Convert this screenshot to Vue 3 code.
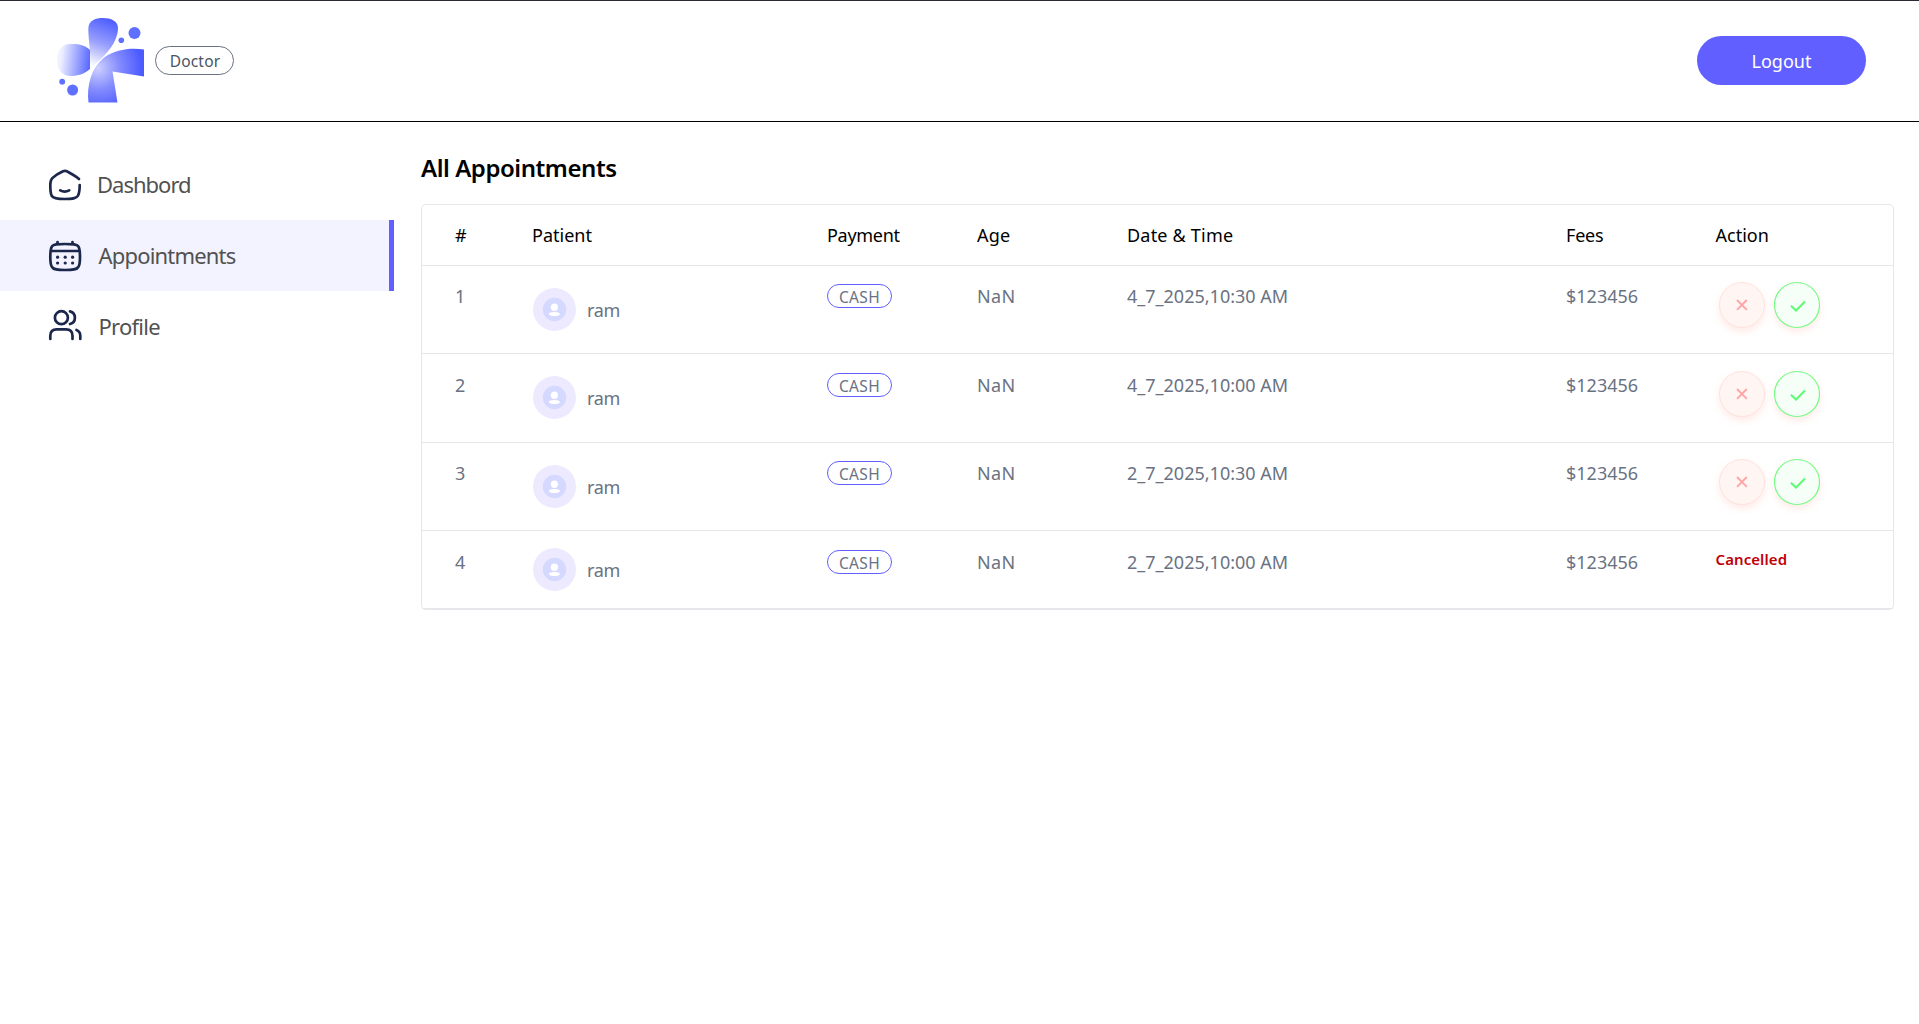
<script setup>
const headers = ['#', 'Patient', 'Payment', 'Age', 'Date & Time', 'Fees', 'Action']
const rows = [
  { n: 1, date: '4_7_2025,10:30 AM', cancelled: false },
  { n: 2, date: '4_7_2025,10:00 AM', cancelled: false },
  { n: 3, date: '2_7_2025,10:30 AM', cancelled: false },
  { n: 4, date: '2_7_2025,10:00 AM', cancelled: true },
]
</script>

<template>
  <div class="page">
    <header class="topbar">
      <svg class="logo" width="90" height="90" viewBox="0 0 90 90">
        <defs>
          <linearGradient id="gTop" gradientUnits="userSpaceOnUse" x1="36" y1="50" x2="54" y2="4">
            <stop offset="0" stop-color="#ffffff" /><stop offset=".5" stop-color="#979efd" /><stop offset="1" stop-color="#4f5fff" />
          </linearGradient>
          <linearGradient id="gLeft" gradientUnits="userSpaceOnUse" x1="0" y1="42" x2="36" y2="46">
            <stop offset="0" stop-color="#f6f7ff" /><stop offset=".15" stop-color="#eceeff" /><stop offset="1" stop-color="#4f5fff" />
          </linearGradient>
          <radialGradient id="gMain" gradientUnits="userSpaceOnUse" cx="42" cy="52" r="44">
            <stop offset="0" stop-color="#cdd0ff" /><stop offset=".5" stop-color="#838bfd" /><stop offset="1" stop-color="#4b5bff" />
          </radialGradient>
        </defs>
        <path d="M34.500 52C35 38 32.300 24 32.300 13C32.300 4 40 2 47 2C55 2 62 5 62 12C62 26 50 40 34.500 52Z" fill="url(#gTop)" />
        <path d="M34 34C28 28 20 28 15 28C6 28 1 34 1 43C1 54 6 60 15 60C22 60 28 58 34 53Z" fill="url(#gLeft)" />
        <path d="M88 33.500V60.500L56.500 55.500L61.500 86.500H32.500C30.500 70 35 52 48 41.500C60 33.500 74 31.500 88 33.500Z" fill="url(#gMain)" />
        <circle cx="78.500" cy="17" r="6" fill="#5f6fff" /><circle cx="65.300" cy="24.300" r="2.800" fill="#5f6fff" />
        <circle cx="6.200" cy="65.700" r="2.900" fill="#5f6fff" /><circle cx="16.600" cy="74" r="5.500" fill="#5f6fff" />
      </svg>
      <p class="role"><span>Doctor</span></p>
      <button class="logout"><span>Logout</span></button>
    </header>

    <div class="body">
      <nav class="side">
        <a class="item">
          <svg width="34" height="34" viewBox="0 0 34 34" class="ico">
            <path d="M31 12C28.500 9.500 22 6 19 4.300Q17 3.300 15 4.300C12 5.700 7 8.700 4.500 10.900C2.400 12.800 2.300 15 2.300 18.500C2.300 23.500 2.500 26.500 3.800 29C5.300 31.500 9 32 16.700 32S28.600 31.500 30.100 28.500C31.500 25.500 31.700 22.500 31.700 18" />
            <path d="M12.200 23.300Q16.700 25.900 21.200 23.300" />
          </svg>
          <span class="t1">Dashbord</span>
        </a>
        <a class="item active">
          <svg width="34" height="34" viewBox="0 0 34 34" class="ico">
            <path d="M9.500 4V6.500M24.500 4V6.500M2.500 13H31.800M17 6C9 6 5.500 6.200 4 8.300C2.300 10.500 2.300 14.500 2.300 19S2.500 27 4 29C5.500 31.700 9 32 17 32S28.800 31.700 30.300 29C31.800 27 32 23.500 32 19S32 10.500 30.300 8.300C28.800 6.200 25 6 17 6Z" />
            <g class="dots"><circle v-for="i in 6" :key="i" :cx="[9.600, 17.200, 24.600][(i - 1) % 3]" :cy="i < 4 ? 19.200 : 25" r="1.600" /></g>
          </svg>
          <span class="t2">Appointments</span>
        </a>
        <a class="item">
          <svg width="34" height="34" viewBox="0 0 34 34" class="ico">
            <circle cx="13.400" cy="8.700" r="6.500" />
            <path d="M2.300 30V26.700Q2.300 20.300 8.800 20.300H18Q24.500 20.300 24.500 26.700V30M22 2.400A6.500 6.500 0 0 1 22 15M28.500 20.900Q32.300 22.400 32.300 26.700V30" />
          </svg>
          <span class="t3">Profile</span>
        </a>
      </nav>

      <main class="main">
        <h1><span>All Appointments</span></h1>
        <div class="table">
          <div class="row head">
            <span v-for="(h, i) in headers" :key="h"><span :class="'h' + i">{{ h }}</span></span>
          </div>
          <div v-for="r in rows" :key="r.n" class="row data" :class="'r' + r.n">
            <span class="txt">{{ r.n }}</span>
            <div class="patient">
              <svg width="43" height="43" viewBox="0 0 43 43">
                <circle cx="21.500" cy="21.500" r="21.500" fill="#edeaff" />
                <circle cx="21.500" cy="21.500" r="11.700" fill="#d6d9ff" />
                <ellipse cx="21.400" cy="19.200" rx="3.600" ry="3.700" fill="#fff" />
                <ellipse cx="21.400" cy="26" rx="5.600" ry="2.100" fill="#fff" />
              </svg>
              <span class="name">ram</span>
            </div>
            <div><p class="cash"><span>CASH</span></p></div>
            <span class="txt"><span class="nan">NaN</span></span>
            <span class="txt"><span class="date">{{ r.date }}</span></span>
            <span class="txt"><span class="fee">$123456</span></span>
            <p v-if="r.cancelled" class="cancelled"><span>Cancelled</span></p>
            <div v-else class="actions">
              <svg width="64" height="64" viewBox="0 0 64 64">
                <circle class="shadow" cx="32" cy="32" r="22" />
                <circle cx="32" cy="32" r="22.500" fill="#fff5f3" stroke="#ffe2dd" />
                <path d="M27 27L36.800 36.800M36.800 27L27 36.800" stroke="#ffa5a5" stroke-width="1.900" fill="none" />
              </svg>
              <svg width="64" height="64" viewBox="0 0 64 64">
                <circle class="shadow" cx="32" cy="32" r="22" />
                <circle cx="32" cy="32" r="22.500" fill="#f5fff8" stroke="#76fb86" stroke-width="1.200" />
                <path d="M26 32.800L31 37.500L40 28.500" stroke="#5dfb70" stroke-width="2" fill="none" />
              </svg>
            </div>
          </div>
        </div>
      </main>
    </div>
  </div>
</template>

<style>
body { margin: 0; background: #fff; }
</style>

<style scoped>
* { box-sizing: border-box; }
.page { height: 1024px; overflow: hidden; border-top: 1px solid #2b2a33; font-family: "Noto Sans", "Open Sans", sans-serif; background: #fff; }
p, h1 { margin: 0; }
.topbar { height: 121px; border-bottom: 1px solid #000; display: flex; align-items: center; padding: 0 53px 0 56px; }
.logo { flex: none; }
.role { margin: 0 0 1px 9px; width: 79px; height: 29px; border: 1px solid #6a7282; border-radius: 15px; display: flex; justify-content: center; align-items: center; font-size: 15.500px; letter-spacing: .200px; color: #4a5565; padding: 0 0 0 1px; white-space: nowrap; }
.logout { margin: 0 0 1px auto; width: 169px; height: 49px; border: 0; border-radius: 25px; background: #615fff; color: #fff; font: 18px "Noto Sans", sans-serif; padding: 0; }
.body { display: flex; }
.side { width: 394px; padding-top: 27px; }
.item { display: flex; align-items: center; height: 71px; padding: 0 0 2px 48px; gap: 17px; color: #515151; font-size: 22px; white-space: nowrap; }
.item.active { background: #f2f3ff; border-right: 5px solid #615fff; }
.t1 { letter-spacing: -1px; margin-left: -2px; }
.t2 { letter-spacing: -.820px; margin-left: -.500px; }
.t3 { letter-spacing: -.750px; margin-left: -.500px; }
.ico { flex: none; fill: none; stroke: #1c274c; stroke-width: 2.700; stroke-linecap: round; stroke-linejoin: round; }
.dots { fill: #1c274c; stroke: none; }
.main { padding-left: 27px; }
h1 { height: 82px; font-size: 24px; font-weight: 600; line-height: 34px; padding-top: 29px; letter-spacing: -.450px; color: #000; white-space: nowrap; }
.table { width: 1473px; height: 406px; border: 1px solid #e5e7eb; border-radius: 5px; }
.row { display: grid; grid-template-columns: 77px 295px 150px 150px 439px 149.500px 1fr; padding-left: 33px; border-bottom: 1px solid #e5e7eb; font-size: 18px; line-height: 24px; white-space: nowrap; }
.head { height: 61px; padding-top: 18px; color: #000; }
.h2 { letter-spacing: -.300px; }
.h3 { letter-spacing: .200px; }
.h4 { letter-spacing: .200px; }
.h5 { letter-spacing: -.200px; }
.data { color: #6a7282; height: 88px; }
.r2 { height: 89px; }
.r4 { height: 78px; }
.txt { padding-top: 18px; }
.r2 .txt, .r4 .txt { padding-top: 19px; }
.nan { letter-spacing: .400px; }
.patient { display: flex; align-items: flex-start; padding-top: 22px; gap: 11px; }
.patient svg { margin-left: 1px; }
.name { padding-top: 10px; letter-spacing: -.300px; }
.r4 .patient { padding-top: 17px; }
.cash { margin-top: 18px; width: 65px; height: 24px; border: 1px solid #615fff; border-radius: 12px; display: flex; justify-content: center; align-items: center; font-size: 15.500px; letter-spacing: .350px; padding-top: 2px; }
.r2 .cash, .r4 .cash { margin-top: 19px; }
.actions { display: flex; padding-top: 7px; margin-left: -5.500px; }
.r2 .actions { padding-top: 8px; }
.actions svg + svg { margin-left: -9px; }
.shadow { fill: #ffcfc4; transform: translateY(4px); filter: blur(4px); opacity: .5; }
.cancelled { padding-top: 16px; font-size: 15px; font-weight: 600; letter-spacing: .080px; color: #c10007; }
</style>
